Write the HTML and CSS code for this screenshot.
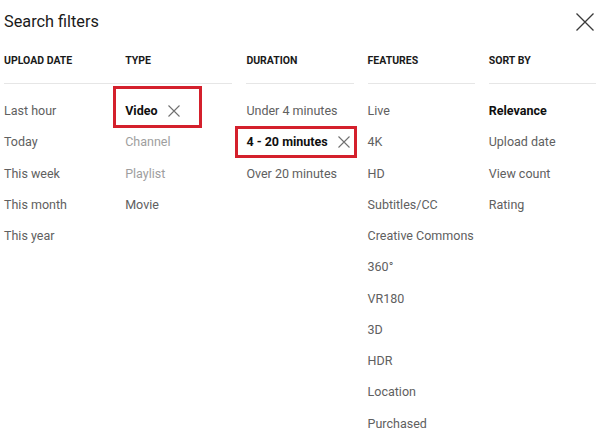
FILE: index.html
```html
<!DOCTYPE html>
<html>
<head>
<meta charset="utf-8">
<link rel="stylesheet" href="styles.css">
</head>
<body>
<div class="dialog">
  <div class="top">
    <h1 class="title">Search filters</h1>
    <button class="close" aria-label="Close">
      <svg width="20" height="20" viewBox="0 0 20 20"><path d="M1.5 1.5 L18.5 18.5 M18.5 1.5 L1.5 18.5" stroke="#3a3a3a" stroke-width="1.3" fill="none"/></svg>
    </button>
  </div>
  <div class="columns">
    <div class="col col-first">
      <div class="head">Upload date</div>
      <ul class="list">
        <li>Last hour</li>
        <li>Today</li>
        <li>This week</li>
        <li>This month</li>
        <li>This year</li>
      </ul>
    </div>
    <div class="col">
      <div class="head">Type</div>
      <ul class="list">
        <li class="selected"><span class="chip chip-video">Video <svg class="x" width="12" height="12" viewBox="0 0 12 12"><path d="M0.5 0.5 L11.5 11.5 M11.5 0.5 L0.5 11.5" stroke="#707070" stroke-width="1.1" fill="none"/></svg></span></li>
        <li class="disabled">Channel</li>
        <li class="disabled">Playlist</li>
        <li>Movie</li>
      </ul>
    </div>
    <div class="col">
      <div class="head">Duration</div>
      <ul class="list">
        <li>Under 4 minutes</li>
        <li class="selected"><span class="chip chip-dur">4 - 20 minutes <svg class="x" width="12" height="12" viewBox="0 0 12 12"><path d="M0.5 0.5 L11.5 11.5 M11.5 0.5 L0.5 11.5" stroke="#707070" stroke-width="1.1" fill="none"/></svg></span></li>
        <li>Over 20 minutes</li>
      </ul>
    </div>
    <div class="col">
      <div class="head">Features</div>
      <ul class="list">
        <li>Live</li>
        <li>4K</li>
        <li>HD</li>
        <li>Subtitles/CC</li>
        <li>Creative Commons</li>
        <li>360°</li>
        <li>VR180</li>
        <li>3D</li>
        <li>HDR</li>
        <li>Location</li>
        <li>Purchased</li>
      </ul>
    </div>
    <div class="col">
      <div class="head">Sort by</div>
      <ul class="list">
        <li class="selected">Relevance</li>
        <li>Upload date</li>
        <li>View count</li>
        <li>Rating</li>
      </ul>
    </div>
  </div>
</div>
</body>
</html>
```
FILE: styles.css
```css
html, body {
  margin: 0;
  padding: 0;
  background: #ffffff;
}
body {
  font-family: Roboto, "Liberation Sans", Arial, sans-serif;
  color: #606060;
  overflow: hidden;
}
.dialog {
  padding: 0 0 0 4px;
}
.top {
  display: flex;
  align-items: center;
  justify-content: space-between;
  height: 44px;
}
.title {
  margin: 0;
  font-size: 16.3px;
  font-weight: 400;
  color: #1a1a1a;
  line-height: 44px;
}
.close {
  border: 0;
  background: none;
  padding: 0;
  margin-right: 5px;
  width: 20px;
  height: 20px;
  display: flex;
}
.columns {
  display: grid;
  grid-template-columns: repeat(5, 121.2px);
}
.head {
  font-size: 10.5px;
  font-weight: 700;
  text-transform: uppercase;
  color: #1a1a1a;
  line-height: 16px;
  padding: 9px 0 14px 0;
  border-bottom: 1px solid #e6e6e6;
  margin-right: 14px;
}
.col-first .head {
  margin-right: -107px;
}
.col-first {
  position: relative;
  z-index: 0;
}
.list {
  list-style: none;
  margin: 0;
  padding: 11px 0 0 0;
}
.list li {
  height: 31.25px;
  font-size: 12.5px;
  white-space: nowrap;
  display: flex;
  align-items: center;
}
.list li.disabled {
  color: #9e9e9e;
}
.list li.selected {
  color: #0f0f0f;
  font-weight: 700;
}
.x {
  display: block;
  flex: none;
}
.chip {
  display: flex;
  align-items: center;
  gap: 10px;
  flex: none;
  box-sizing: border-box;
  border: 3px solid #d4202c;
}
.chip-video {
  width: 89px;
  height: 42px;
  margin: 0 0 7px -12px;
  padding: 7px 0 0 9px;
}
.chip-dur {
  width: 122px;
  height: 32px;
  margin: 0 0 0 -11px;
  padding: 0 0 0 8px;
}
```
